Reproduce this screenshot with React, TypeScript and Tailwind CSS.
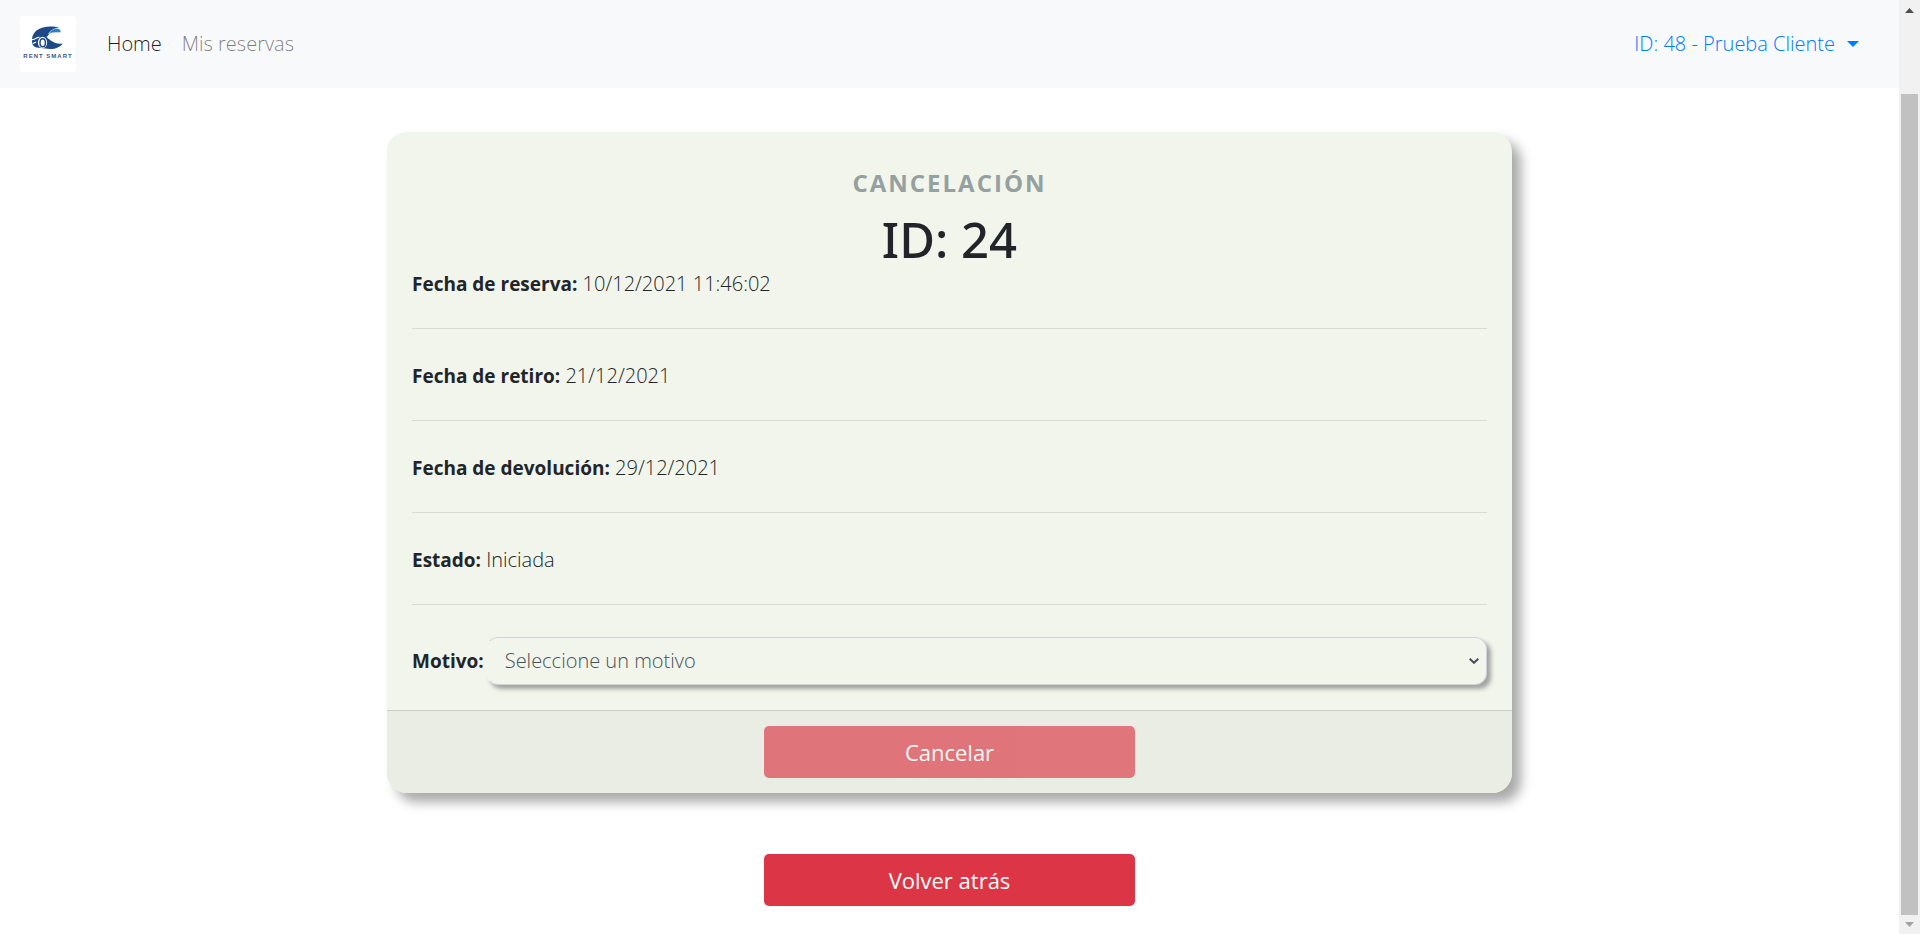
import { useState } from "react";

const details = [
  { label: "Fecha de reserva:", value: "10/12/2021 11:46:02" },
  { label: "Fecha de retiro:", value: "21/12/2021" },
  { label: "Fecha de devolución:", value: "29/12/2021" },
  { label: "Estado:", value: "Iniciada" },
];

function Logo() {
  return (
    <svg viewBox="0 0 56 56" className="size-14 rounded-sm bg-white" role="img" aria-label="Rent Smart">
      <path
        d="M39 11.500C32 9.500 22 10 16.500 14.500 12 18.500 11.300 23.500 12.500 28c.5 2 2 3 4 3.500l9 1c7 1.500 14.500-.5 17.200-5C38 28.300 34.500 27 31.500 25c-2-1.400-3.500-2.800-5-3.700 1.200-1.200 2.200-2.500 3.500-4.300 2-2.800 5-4.500 9-5.500z"
        fill="#1d4a86"
      />
      <path d="M28.500 17.500c2-3 5-5 8.500-5 2.500 0 4 1.400 4 4-4-.3-8 0-12.500 1z" fill="#2a7fc0" stroke="#fff" strokeWidth=".5" />
      <path d="M12 23.500c2.500.8 4-2 7.500-2.500M13 27.500l3-1.500" stroke="#fff" strokeWidth="1.200" fill="none" />
      <ellipse cx="22.500" cy="26.500" rx="4.600" ry="5.800" fill="#fff" />
      <ellipse cx="22.700" cy="26.700" rx="2.700" ry="4" fill="none" stroke="#1d4a86" strokeWidth="1.500" />
      <text
        x="28"
        y="42"
        textAnchor="middle"
        fontFamily="Liberation Sans, sans-serif"
        fontSize="6"
        fontWeight="700"
        letterSpacing="1"
        fill="#3d5788"
      >
        RENT SMART
      </text>
    </svg>
  );
}

function Navbar() {
  return (
    <nav className="flex h-22 items-center bg-[#f8f9fb] px-5">
      <a href="#inicio">
        <Logo />
      </a>
      <ul className="ml-[31px] flex gap-5">
        <li>
          <a href="#home" className="text-black/90">Home</a>
        </li>
        <li>
          <a href="#reservas" className="text-black/50">Mis reservas</a>
        </li>
      </ul>
      <button type="button" className="mr-5 ml-auto flex items-center gap-3 text-[#007bff]">
        ID: 48 - Prueba Cliente
        <svg viewBox="0 0 12 6" className="h-[6px] w-3" fill="currentColor" aria-hidden="true">
          <path d="M0 0h12L6 6z" />
        </svg>
      </button>
    </nav>
  );
}

function Scrollbar() {
  return (
    <div className="sticky top-0 flex h-screen w-[21px] shrink-0 flex-col items-center bg-[#f1f1f1]" aria-hidden="true">
      <svg viewBox="0 0 9 5" className="mt-2 h-[5px] w-[9px]" fill="#505050">
        <path d="M0 5h9L4.500 0z" />
      </svg>
      <div className="mt-[81px] mb-[7px] w-[17px] flex-1 bg-[#c1c1c1]" />
      <svg viewBox="0 0 9 5" className="mb-[7px] h-[5px] w-[9px]" fill="#a3a3a3">
        <path d="M0 0h9L4.500 5z" />
      </svg>
    </div>
  );
}

export default function App() {
  const [reason, setReason] = useState("");

  return (
    <div className="flex min-h-screen bg-white font-['Open_Sans',sans-serif] text-[20px] leading-[30px] font-light text-[#212529]">
      <div className="min-w-0 flex-1">
        <Navbar />
        <main className="mx-auto mt-11 flex max-w-[1125px] flex-col items-center">
          <section className="w-full rounded-[20px] bg-[#f2f5eb] shadow-[9px_9px_12px_#aaa]">
            <div className="p-[25px]">
              <header className="pt-[11px] text-center">
                <h1 className="text-2xl leading-[30px] font-bold tracking-[2px] text-[#95a0a0]">CANCELACIÓN</h1>
                <p className="mt-[11px] font-['Noto_Sans',sans-serif] text-[49px] leading-[60px] font-medium">ID: 24</p>
              </header>
              {details.map((item) => (
                <p key={item.label} className="mb-8 border-b border-[#d9dcd3] pb-[29px]">
                  <strong className="text-[19px] font-bold">{item.label}</strong> {item.value}
                </p>
              ))}
              <div className="flex items-center">
                <label htmlFor="motivo" className="pr-[2px] text-[19px] font-bold">Motivo:</label>
                <div className="relative flex-1">
                  <select
                    id="motivo"
                    value={reason}
                    onChange={(event) => setReason(event.target.value)}
                    className="block h-12 w-full appearance-none rounded-xl border border-[#ced4da] border-l-transparent bg-[#f2f5eb] px-[18px] text-[#495057] shadow-[4px_4px_4px_#a3a3a3]"
                  >
                    <option value="">Seleccione un motivo</option>
                    <option value="fechas">Cambio de fechas</option>
                    <option value="otro">Otro</option>
                  </select>
                  <svg
                    viewBox="0 0 10 6"
                    className="pointer-events-none absolute top-[21px] right-2 h-[6px] w-[10px]"
                    fill="none"
                    stroke="#495057"
                    strokeWidth="2"
                    aria-hidden="true"
                  >
                    <path d="M.7.700 5 4.800 9.300.700" />
                  </svg>
                </div>
              </div>
            </div>
            <footer className="flex justify-center rounded-b-[20px] border-t border-[#c9ccc3] bg-[#e9ede3] py-[15px]">
              <button
                type="button"
                disabled={!reason}
                className="w-[33%] rounded-[5px] bg-[#dc3545] py-[11px] text-[22px] font-normal text-white disabled:opacity-65"
              >
                Cancelar
              </button>
            </footer>
          </section>
          <button
            type="button"
            className="mt-[61px] w-[33%] rounded-[5px] bg-[#dc3545] py-[11px] text-[22px] font-normal text-white"
          >
            Volver atrás
          </button>
        </main>
      </div>
      <Scrollbar />
    </div>
  );
}
